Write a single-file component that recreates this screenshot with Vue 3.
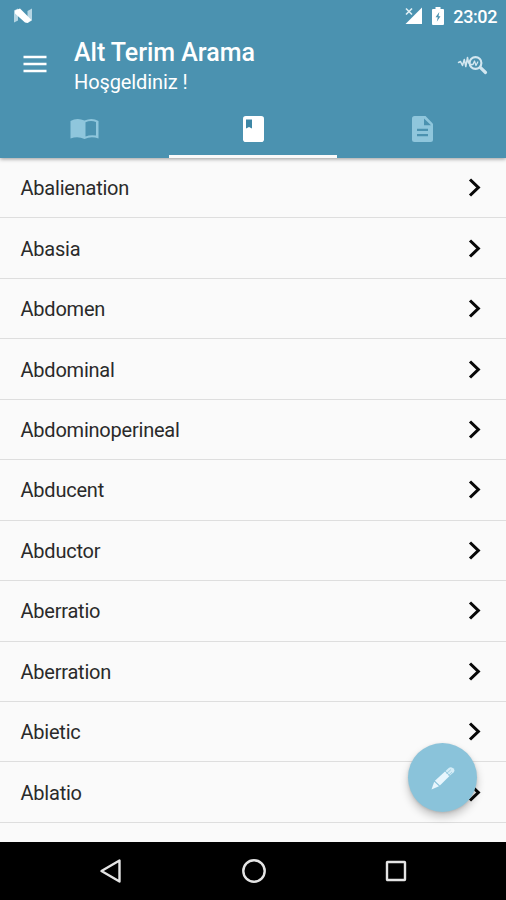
<script setup>
const terms = [
  'Abalienation', 'Abasia', 'Abdomen', 'Abdominal', 'Abdominoperineal', 'Abducent',
  'Abductor', 'Aberratio', 'Aberration', 'Abietic', 'Ablatio',
]
</script>

<template>
  <div class="screen">
    <header class="header">
      <div class="status">
        <svg class="nougat" width="20" height="16" viewBox="0 0 20 16">
          <path d="M1 2.500 5 0.500V12.500L1 14.500ZM14.500 3 19 0.500V12.500L14.500 15Z" fill="#b5d5e3" />
          <path d="M2 2.500 7 0.500 18.500 12 14.500 15 12 14.500 2 5.500Z" fill="#fff" />
        </svg>
        <div class="indicators">
          <svg class="signal" width="18" height="18" viewBox="0 0 18 18">
            <path d="M17 .5V17H.5Z" fill="#fff" />
            <path d="M1 1.500 7 7.500M7 1.500 1 7.500" stroke="#4b92b0" stroke-width="3.500" />
            <path d="M1 1.500 7 7.500M7 1.500 1 7.500" stroke="#e2f0f5" stroke-width="1.600" />
          </svg>
          <svg class="battery" width="12" height="18" viewBox="0 0 12 18">
            <path d="M3.500 0h5v2H11q1 0 1 1v14q0 1-1 1H1q-1 0-1-1V3q0-1 1-1h2.500Z" fill="#fff" />
            <path d="M7.300 5 3.500 10.200h2.300l-1 4.500 3.700-5.500H6.500Z" fill="#4b92b0" />
          </svg>
          <span class="clock">23:02</span>
        </div>
      </div>
      <div class="toolbar">
        <svg class="menu" width="24" height="18" viewBox="0 0 24 18">
          <path d="M.5 2h23M.5 9h23M.5 16h23" stroke="#fff" stroke-width="2.600" />
        </svg>
        <div class="titles">
          <h1>Alt Terim Arama</h1>
          <p>Hoşgeldiniz !</p>
        </div>
        <svg class="search" width="31" height="22" viewBox="0 0 31 22" fill="none" stroke="#d3e7f0" stroke-linecap="round" stroke-linejoin="round">
          <path d="M1.500 8.500 3.500 7.500 5.500 11.500 7.300 5.500 8.800 12.500 10.500 3.500 11.500 9" stroke-width="1.500" />
          <circle cx="18.500" cy="9" r="5.900" stroke-width="2.100" />
          <path d="m23.500 13.700 5 4.800" stroke-width="3.200" />
          <path d="M13.500 10.500h2.500L17.500 7l1.500 4.500 1.800-3.500" stroke-width="1.300" />
        </svg>
      </div>
      <nav class="tabs">
        <div class="tab">
          <svg width="29" height="22" viewBox="0 0 29 22">
            <path d="M.5 3Q7-.8 14.500 2.500 22-.8 28.500 3V20.500Q21 18 14.500 21 8 18 .5 20.500Z" fill="#8fc6dc" />
            <path d="M15.500 4.200Q21 2 26 4.100V17.600Q20.500 16.500 15.500 18.500Z" fill="#4b92b0" />
          </svg>
        </div>
        <div class="tab active">
          <svg width="21" height="26" viewBox="0 0 21 26">
            <rect width="21" height="26" rx="2.800" fill="#fff" />
            <path d="M3 3.500H9V12.500L6 11 3 12.500Z" fill="#3d86a5" />
          </svg>
        </div>
        <div class="tab">
          <svg width="21" height="26" viewBox="0 0 21 26">
            <path d="M2.500 0H13.500L21 7.800V23.500Q21 26 18.500 26H2.500Q0 26 0 23.500V2.500Q0 0 2.500 0Z" fill="#8fc6dc" />
            <path d="M12 2.500V9.300H19ZM5 12.700H16V15H5ZM5 18H16V20.300H5Z" fill="#4b92b0" />
          </svg>
        </div>
      </nav>
    </header>

    <main class="list">
      <div v-for="term in terms" :key="term" class="row">
        <span>{{ term }}</span>
        <svg width="14" height="20" viewBox="0 0 14 20">
          <path d="m2 1.500 8.300 8L2 17.500" fill="none" stroke="#080808" stroke-width="3.100" />
        </svg>
      </div>
      <button class="fab" aria-label="Edit">
        <svg width="26" height="26" viewBox="0 0 26 26">
          <path d="M1.500 24.500 4.200 16.800 9 21.300Z" fill="#e8f6fd" />
          <path d="M4.900 15.800 15 6.500 19.500 11 9.900 20.400Z" fill="#e8f6fd" />
          <path d="M15.500 6 19 2.800Q20.800 1.300 23.200 3.300 25.500 5.500 23.700 7.300L20 10.500Z" fill="#d5edf7" />
          <path d="m16.500 8.500 4.500-4M18.500 10.500l3.500-3.300" stroke="#9ccee2" stroke-width=".9" />
        </svg>
      </button>
    </main>

    <footer class="navbar">
      <svg width="23" height="26" viewBox="0 0 23 26"><path d="M20.500 2.500V23.500L2.500 13Z" /></svg>
      <svg width="26" height="26" viewBox="0 0 26 26"><circle cx="13" cy="13" r="10.700" /></svg>
      <svg width="22" height="22" viewBox="0 0 22 22"><rect x="2" y="2" width="18" height="18" rx=".5" /></svg>
    </footer>
  </div>
</template>

<style>
body { margin: 0; }
</style>

<style scoped>
.screen { height: 900px; width: 506px; display: flex; flex-direction: column; overflow: hidden; background: #fafafa; font-family: Roboto, sans-serif; }
svg { display: block; flex: none; }
.header { height: 158px; flex: none; background: #4b92b0; color: #fff; box-shadow: 0 1px 4px rgba(0, 0, 0, .4); position: relative; z-index: 1; }
.status { height: 31px; display: flex; justify-content: space-between; align-items: center; padding: 0 9px 0 13px; box-sizing: border-box; }
.indicators { display: flex; align-items: center; }
.signal { margin-right: 9px; }
.battery { margin-right: 9px; }
.clock { font-size: 18px; font-weight: 500; line-height: 31px; letter-spacing: -.4px; padding-top: 1px; }
.toolbar { height: 70px; display: flex; align-items: center; padding: 0 18px 0 23px; box-sizing: border-box; }
.menu { margin-top: -5px; }
.titles { margin-left: 27px; flex: 1; padding-top: 1px; }
h1 { margin: 0; font-size: 25px; line-height: 31px; font-weight: 500; letter-spacing: -.03px; }
p { margin: 0; font-size: 20px; line-height: 28px; letter-spacing: -.1px; }
.search { margin-top: -3px; }
.tabs { height: 57px; display: grid; grid-template-columns: repeat(3, 1fr); }
.tab { display: flex; align-items: center; justify-content: center; box-sizing: border-box; border-bottom: 3px solid transparent; padding: 1px 0 0 1px; }
.tab.active { border-color: #fafafa; }
.list { height: 684px; flex: none; position: relative; overflow: hidden; }
.row { height: 60.450px; box-sizing: border-box; border-bottom: 1.500px solid #dedede; padding: 1px 24px 0 20.500px; display: flex; justify-content: space-between; align-items: center; color: #2a2a2a; font-size: 20px; letter-spacing: -.22px; }
.fab { position: absolute; right: 29px; top: 585px; width: 69px; height: 69px; border: 0; padding: 0; border-radius: 50%; background: #8ac3da; box-shadow: 0 5px 9px rgba(0, 0, 0, .22), 0 1px 3px rgba(0, 0, 0, .12); display: flex; align-items: center; justify-content: center; }
.navbar { height: 58px; background: #000; display: flex; justify-content: space-between; align-items: center; padding: 0 99px 0 99px; box-sizing: border-box; }
.navbar svg { fill: none; stroke: #e4e4e4; stroke-width: 2.400; stroke-linejoin: round; }
</style>
